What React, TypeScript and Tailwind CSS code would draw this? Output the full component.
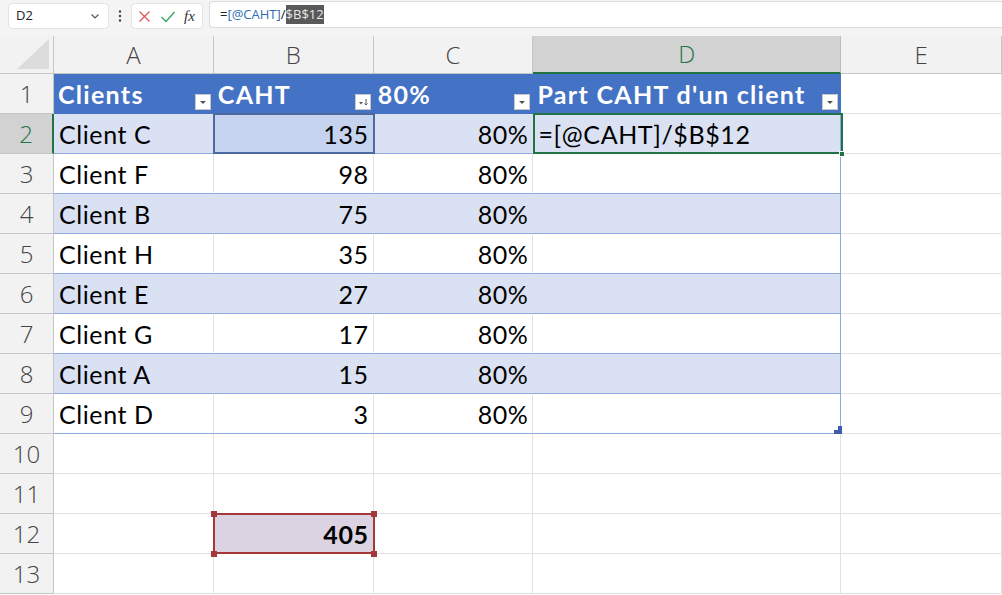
import React from "react";

const cols = [160, 160, 160, 308, 161];
const letters = ["A", "B", "C", "D", "E"];

type Row = [string, string, string, string];
const data: Row[] = [
  ["Client C", "135", "80%", "=[@CAHT]/$B$12"],
  ["Client F", "98", "80%", ""],
  ["Client B", "75", "80%", ""],
  ["Client H", "35", "80%", ""],
  ["Client E", "27", "80%", ""],
  ["Client G", "17", "80%", ""],
  ["Client A", "15", "80%", ""],
  ["Client D", "3", "80%", ""],
];

function FilterBtn({ sort }: { sort?: boolean }) {
  return (
    <div className="absolute right-[2px] bottom-[3px] w-[16px] h-[16px] bg-white border border-[#c8c8c8] flex items-center justify-center">
      <svg width="14" height="14" viewBox="0 0 14 14">
        {sort ? (
          <>
            <path d="M3 7 L7 7 L5 9.5 Z" fill="#555" />
            <path d="M10 4 L10 10 M8.5 8.5 L10 10 L11.5 8.5" stroke="#555" strokeWidth="1" fill="none" />
          </>
        ) : (
          <path d="M4 6 L10 6 L7 9 Z" fill="#555" />
        )}
      </svg>
    </div>
  );
}

export default function App() {
  const font = { fontFamily: "Lato, 'Noto Sans', sans-serif" };
  const rowH = 40;
  return (
    <div className="w-[1002px] h-[595px] overflow-hidden bg-white relative" style={font}>
      {/* formula bar */}
      <div className="h-[36px] bg-[#f4f4f4] flex items-start pt-[3px] pl-[8px]" style={{ fontFamily: "'Open Sans', 'Noto Sans', sans-serif" }}>
        <div className="w-[101px] h-[26px] bg-white rounded-[4px] border border-[#e3e3e3] flex items-center justify-between px-[7px] text-[13px] text-[#222]">
          <span>D2</span>
          <svg width="12" height="12" viewBox="0 0 12 12"><path d="M2.5 4.5 L6 8 L9.5 4.5" stroke="#555" strokeWidth="1.2" fill="none" /></svg>
        </div>
        <div className="w-[22px] h-[26px] flex items-center justify-center">
          <svg width="4" height="14" viewBox="0 0 4 14"><circle cx="2" cy="2.5" r="1.2" fill="#444" /><circle cx="2" cy="7" r="1.2" fill="#444" /><circle cx="2" cy="11.5" r="1.2" fill="#444" /></svg>
        </div>
        <div className="w-[72px] h-[26px] bg-white rounded-[4px] border border-[#e3e3e3] flex items-center gap-[8px] px-[5px]">
          <svg width="15" height="15" viewBox="0 0 15 15"><path d="M2.5 2.5 L12.5 12.5 M12.5 2.5 L2.5 12.5" stroke="#e05555" strokeWidth="1.3" /></svg>
          <svg width="16" height="15" viewBox="0 0 16 15"><path d="M1.5 8 L6 12.5 L14.5 3" stroke="#3aa063" strokeWidth="1.3" fill="none" /></svg>
          <span className="italic text-[15px] text-[#333]" style={{ fontFamily: "'Liberation Serif', serif" }}>fx</span>
        </div>
        <div className="ml-[6px] flex-1 h-[27px] mt-[-2px] bg-white border-y border-l border-[#dcdcdc] rounded-l-[4px] flex items-center pl-[10px] text-[13px]">
          <span className="text-[#222]">=</span>
          <span className="text-[#2e6db4]">[@CAHT]</span>
          <span className="text-[#222]">/</span>
          <span className="bg-[#595959] text-[#e8e8e8]">$B$12</span>
        </div>
      </div>

      {/* grid */}
      <div className="relative">
        {/* column headers */}
        <div className="flex h-[38px]">
          <div className="w-[54px] h-[38px] bg-[#f2f2f2] border-r border-b border-[#c6c6c6] relative">
            <svg className="absolute right-[4px] bottom-[4px]" width="32" height="30" viewBox="0 0 32 30"><path d="M32 0 L32 30 L0 30 Z" fill="#dcdcdc" /></svg>
          </div>
          {letters.map((l, i) => {
            const sel = l === "D";
            return (
              <div
                key={l}
                style={{ width: cols[i] }}
                className={
                  sel
                    ? "h-[38px] bg-[#d2d2d2] border-r border-[#bdbdbd] border-b-2 border-b-[#217346] flex items-center justify-center text-[24px] text-[#217346]"
                    : "h-[38px] bg-[#f2f2f2] border-r border-b border-[#c6c6c6] flex items-center justify-center text-[24px] text-[#444]"
                }
              >
                <span style={{ fontFamily: "'Open Sans', 'Noto Sans', sans-serif", fontWeight: 300 }}>{l}</span>
              </div>
            );
          })}
        </div>

        {/* rows */}
        {Array.from({ length: 13 }).map((_, r) => {
          const rn = r + 1;
          const isHeader = rn === 1;
          const dataRow = rn >= 2 && rn <= 9 ? data[rn - 2] : null;
          const banded = dataRow && rn % 2 === 0;
          return (
            <div key={rn} className="flex" style={{ height: rowH }}>
              <div
                className={
                  rn === 2
                    ? "w-[54px] bg-[#d2d2d2] border-r-2 border-r-[#217346] border-b border-[#c6c6c6] flex items-center justify-center text-[24px] text-[#217346]"
                    : "w-[54px] bg-[#f2f2f2] border-r border-b border-[#c6c6c6] flex items-center justify-center text-[24px] text-[#444]"
                }
              >
                <span style={{ fontFamily: "'Open Sans', 'Noto Sans', sans-serif", fontWeight: 300 }}>{rn}</span>
              </div>
              {cols.map((w, c) => {
                let cls = "relative border-r border-b flex items-center pt-[3px] text-[25px] text-black ";
                let content: React.ReactNode = null;
                if (isHeader && c < 4) {
                  cls += "bg-[#4472c4] border-[#4472c4] text-white font-bold tracking-[1.3px] pl-[4px]";
                  const heads = ["Clients", "CAHT", "80%", "Part CAHT d'un client"];
                  content = (
                    <>
                      <span>{heads[c]}</span>
                      <FilterBtn sort={c === 1} />
                    </>
                  );
                } else if (dataRow && c < 4) {
                  if (rn === 2 && c === 1) cls += "bg-[#c5d3ee] ";
                  else cls += banded ? "bg-[#d9e1f2] " : "bg-white ";
                  cls += "border-b-[#8ea9db] tracking-[0.6px] ";
                  if (c === 3) cls += "border-r-[#8ea9db] ";
                  else cls += banded ? "border-r-[#d9e1f2] " : "border-r-[#e1e1e1] ";
                  if (c === 1 || c === 2) cls += "justify-end pr-[4px]";
                  else cls += "pl-[5px]";
                  content = dataRow[c];
                } else if (rn === 12 && c === 1) {
                  cls += "bg-[#dbd3e1] border-[#e1e1e1] justify-end pr-[4px] font-bold tracking-[0.6px]";
                  content = "405";
                } else {
                  cls += "bg-white border-[#e1e1e1]";
                }
                return (
                  <div key={c} style={{ width: w }} className={cls}>
                    {content}
                  </div>
                );
              })}
            </div>
          );
        })}

        {/* B2 reference highlight */}
        <div className="absolute left-[213px] top-[77px] w-[162px] h-[41px] border-2 border-[#4d6a9e] pointer-events-none" />
        {/* D2 active cell */}
        <div className="absolute left-[533px] top-[77px] w-[310px] h-[41px] border-2 border-[#217346] pointer-events-none" />
        <div className="absolute left-[839px] top-[115px] w-[6px] h-[6px] bg-[#217346] border border-white" />
        {/* B12 highlight */}
        <div className="absolute left-[213px] top-[477px] w-[162px] h-[41px] border-2 border-[#a4373a] pointer-events-none" />
        <div className="absolute left-[211px] top-[475px] w-[6px] h-[6px] bg-[#a4373a]" />
        <div className="absolute left-[371px] top-[475px] w-[6px] h-[6px] bg-[#a4373a]" />
        <div className="absolute left-[211px] top-[515px] w-[6px] h-[6px] bg-[#a4373a]" />
        <div className="absolute left-[371px] top-[515px] w-[6px] h-[6px] bg-[#a4373a]" />
        {/* table resize handle */}
        <svg className="absolute left-[834px] top-[390px]" width="8" height="8" viewBox="0 0 8 8">
          <path d="M8 0 L8 8 L0 8 L0 4 L4 4 L4 0 Z" fill="#3f5ba9" />
        </svg>
      </div>
    </div>
  );
}
